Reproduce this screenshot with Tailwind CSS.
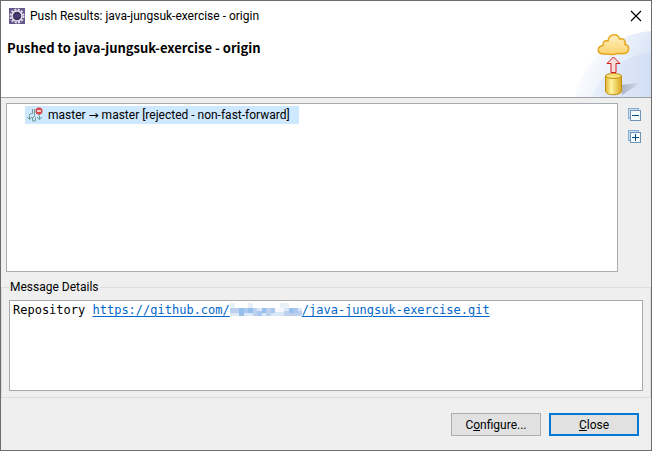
<!DOCTYPE html>
<html lang="en">
<head>
  <meta charset="UTF-8" />
  <meta name="viewport" content="width=device-width, initial-scale=1.0" />
  <title>Push Results: java-jungsuk-exercise - origin</title>
  <script src="https://cdn.jsdelivr.net/npm/@tailwindcss/browser@4"></script>
</head>
<body class="min-h-screen flex flex-col border border-[#6d6c6d] bg-[#efefef] text-black text-[12px] leading-4 font-['Roboto','DejaVu_Sans',sans-serif]">
  <!-- title bar and banner -->
  <header class="relative h-[97px] bg-white border-b border-[#a0a0a0]">
    <svg class="absolute right-0 bottom-0 w-[76px] h-[66px]" viewBox="0 0 76 66" fill="none">
      <defs>
        <linearGradient id="glow" x1="0" y1="0" x2="1" y2="0.4">
          <stop offset="0.2" stop-color="#ffffff" />
          <stop offset="1" stop-color="#dae4f7" />
        </linearGradient>
        <linearGradient id="glowInner" x1="0" y1="0" x2="1" y2="0">
          <stop offset="0" stop-color="#e6edfa" />
          <stop offset="1" stop-color="#d3dff5" />
        </linearGradient>
        <linearGradient id="cloud" x1="0" y1="0" x2="0" y2="1">
          <stop offset="0" stop-color="#fff0c4" />
          <stop offset="1" stop-color="#fdd26b" />
        </linearGradient>
        <linearGradient id="drum" x1="0" y1="0" x2="1" y2="0">
          <stop offset="0" stop-color="#e0b22c" />
          <stop offset="0.35" stop-color="#fff6a0" />
          <stop offset="1" stop-color="#d9a61c" />
        </linearGradient>
        <linearGradient id="shade" x1="0" y1="0" x2="1" y2="0">
          <stop offset="0" stop-color="#a9b2c3" />
          <stop offset="1" stop-color="#d0d9ea" />
        </linearGradient>
      </defs>
      <path d="M0 66C8 30 34 4 76 0V66Z" fill="url(#glow)" />
      <path d="M18 66C24 44 46 26 76 21V66Z" fill="url(#glowInner)" />
      <path d="M46 54L61 52Q65 52 61 55L47 64Z" fill="url(#shade)" />
      <path d="M29 23C22 23 21 16 28 14.500C28 10 30 9 33 10C34 2 43 2 44.500 8C49 7 51 10 50 13.500C56 15 54 23 48 22.500C45 23 44 22 42 22.500C38 25 34 22.500 29 23Z" fill="url(#cloud)" stroke="#e4a71d" stroke-width="1.5" />
      <path d="M38.500 26L45 32.500H41V41.500H36V32.500H32Z" fill="#fbdcdc" stroke="#cf1f1f" />
      <path d="M30.500 45V60C31 65 46 65 46.500 60V45Z" fill="url(#drum)" stroke="#c08f14" />
      <ellipse cx="38.500" cy="45" rx="8" ry="2.500" fill="#fbe37a" stroke="#c08f14" />
    </svg>
    <div class="relative flex items-center h-[30px] pl-2 pr-2">
      <svg class="w-4 h-4 mr-[5px] shrink-0" viewBox="0 0 16 16" fill="none">
        <rect width="16" height="16" fill="#65568c" />
        <circle cx="8" cy="8" r="6.500" stroke="#e2dfe8" stroke-width="2" stroke-dasharray="2 1.400" />
        <circle cx="8" cy="8" r="5" fill="#3a2f63" stroke="#e6e3ea" stroke-width="1.500" />
        <path d="M4 7H12M4 9H12" stroke="#54457e" />
      </svg>
      <h1 class="flex-1">Push Results: java-jungsuk-exercise - origin</h1>
      <button type="button" aria-label="Close window" class="w-4 h-4">
        <svg class="w-4 h-4" viewBox="0 0 16 16"><path d="M4 3L14 13M14 3L4 13" stroke="#000" stroke-width="1.200" /></svg>
      </button>
    </div>
    <h2 class="relative pl-[6px] pt-[9px] text-[13px] leading-4 font-bold font-['Noto_Sans_CJK_KR',sans-serif]">Pushed to java-jungsuk-exercise - origin</h2>
  </header>

  <main class="flex-1 flex flex-col pt-[5px]">
    <section class="flex h-[169px] pl-[5px] pr-[9px]">
      <ul class="flex-1 bg-white border border-[#a9abb3] pl-[18px] pt-[2px]">
        <li class="flex items-center h-[18px] w-[274px] pl-[2px] bg-[#cde8ff]">
          <svg class="w-4 h-4 mr-[5px] shrink-0" viewBox="0 0 16 16" fill="none" stroke="#6f9c93">
            <path d="M5.500 2V6.500H4.500Q2.500 6.500 2.500 8.500V12.500M.5 10L2.500 12.500L5 10M7.500 2V8.500Q7.500 10.500 5.500 10.500V14H8.500V10.500M9.500 6.500H10.500Q12.500 6.500 12.500 8.500V12.500M10 10L12.500 12.500L15 10" />
            <circle cx="12" cy="4" r="3.500" fill="#dc4446" stroke="none" />
            <path d="M10 4H14" stroke="#fff" stroke-width="1.500" />
          </svg>
          <span class="whitespace-nowrap">master → master [rejected - non-fast-forward]</span>
        </li>
      </ul>
      <div class="flex flex-col gap-[8px] pl-[10px] pt-[5px]">
        <button type="button" aria-label="Collapse all" class="w-[14px] h-[14px]">
          <svg class="w-[14px] h-[14px]" viewBox="0 0 14 14" fill="none">
            <rect x=".5" y=".5" width="10" height="10" fill="#c6def0" stroke="#86aed0" />
            <rect x="2.500" y="2.500" width="10" height="10" fill="#f4fbff" stroke="#7193b4" />
            <path d="M4 7.500H11" stroke="#0d4a7c" />
          </svg>
        </button>
        <button type="button" aria-label="Expand all" class="w-[14px] h-[14px]">
          <svg class="w-[14px] h-[14px]" viewBox="0 0 14 14" fill="none">
            <rect x=".5" y=".5" width="10" height="10" fill="#c6def0" stroke="#86aed0" />
            <rect x="2.500" y="2.500" width="10" height="10" fill="#f4fbff" stroke="#7193b4" />
            <path d="M4 7.500H11M7.500 4V11" stroke="#0d4a7c" />
          </svg>
        </button>
      </div>
    </section>

    <fieldset class="mt-[7px] border border-[#dcdcdc] px-[7px] pb-[6px]">
      <legend class="px-px">Message Details</legend>
      <div class="mt-[5px] h-[91px] bg-white border border-[#a9a9a9] px-[3px] pt-px whitespace-nowrap font-['DejaVu_Sans_Mono',monospace]">
        Repository <a href="#" class="text-[#0066cc] underline underline-offset-2">https://github.com/<svg class="inline-block w-[72px] h-[13px] align-[-2px]" viewBox="0 0 80 13" preserveAspectRatio="none" shape-rendering="crispEdges">
          <path d="M0 0H5V5H0ZM20 0H25V5H20ZM55 0H65V5H55Z" fill="#e8f0fa" />
          <path d="M0 5H80V13H0Z" fill="#dbe8f8" />
          <path d="M0 5H10V10H0ZM25 5H30V13H25ZM40 5H45V13H40ZM60 8H80V13H60Z" fill="#bdd0ee" />
          <path d="M10 5H15V13H10ZM20 5H25V10H20ZM35 5H40V10H35ZM65 5H70V10H65Z" fill="#96c0ec" />
          <path d="M15 5H20V10H15ZM30 8H35V13H30ZM45 5H50V10H45ZM70 5H75V10H70Z" fill="#aac8f0" />
          <path d="M50 5H60V9H50Z" fill="#f4f8fd" />
        </svg>/java-jungsuk-exercise.git</a>
      </div>
    </fieldset>

    <footer class="flex justify-end gap-2 pt-[15px] pr-3 pb-[14px]">
      <button type="button" class="w-[90px] h-[23px] bg-[#e1e1e1] border border-[#adadad]">C<u>o</u>nfigure...</button>
      <button type="button" class="w-[90px] h-[23px] bg-[#e1e1e1] border-2 border-[#0078d7]"><u>C</u>lose</button>
    </footer>
  </main>
</body>
</html>
